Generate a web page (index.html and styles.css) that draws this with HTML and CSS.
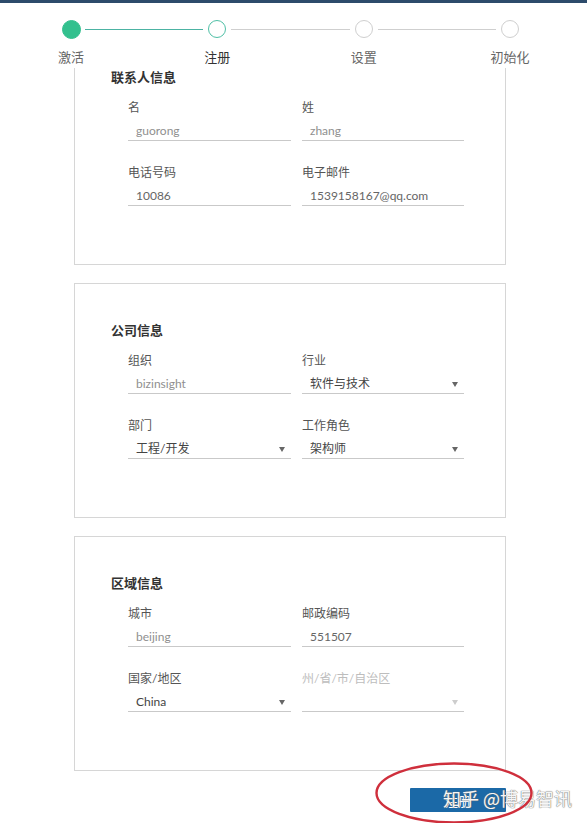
FILE: index.html
```html
<!DOCTYPE html>
<html lang="zh-CN">
<head>
<meta charset="utf-8">
<title>注册</title>
<link rel="stylesheet" href="styles.css">
</head>
<body>
<div class="topbar"></div>
<header class="stepper">
  <div class="step"><span class="dot dot-done"></span><span class="step-label">激活</span></div>
  <span class="connector connector-done"></span>
  <div class="step"><span class="dot dot-current"></span><span class="step-label step-label-current">注册</span></div>
  <span class="connector"></span>
  <div class="step"><span class="dot"></span><span class="step-label">设置</span></div>
  <span class="connector"></span>
  <div class="step"><span class="dot"></span><span class="step-label">初始化</span></div>
</header>

<main class="cards">
  <section class="card card-first">
    <h2 class="card-title">联系人信息</h2>
    <div class="fields">
      <div class="field"><div class="label">名</div><div class="input muted">guorong</div></div>
      <div class="field"><div class="label">姓</div><div class="input muted">zhang</div></div>
      <div class="field"><div class="label">电话号码</div><div class="input">10086</div></div>
      <div class="field"><div class="label">电子邮件</div><div class="input">1539158167@qq.com</div></div>
    </div>
  </section>

  <section class="card">
    <h2 class="card-title">公司信息</h2>
    <div class="fields">
      <div class="field"><div class="label">组织</div><div class="input muted">bizinsight</div></div>
      <div class="field"><div class="label">行业</div><div class="input select"><span>软件与技术</span><span class="arrow"></span></div></div>
      <div class="field"><div class="label">部门</div><div class="input select"><span>工程/开发</span><span class="arrow"></span></div></div>
      <div class="field"><div class="label">工作角色</div><div class="input select"><span>架构师</span><span class="arrow"></span></div></div>
    </div>
  </section>

  <section class="card">
    <h2 class="card-title">区域信息</h2>
    <div class="fields">
      <div class="field"><div class="label">城市</div><div class="input muted">beijing</div></div>
      <div class="field"><div class="label">邮政编码</div><div class="input">551507</div></div>
      <div class="field"><div class="label">国家/地区</div><div class="input select"><span>China</span><span class="arrow"></span></div></div>
      <div class="field field-disabled"><div class="label">州/省/市/自治区</div><div class="input select"><span></span><span class="arrow"></span></div></div>
    </div>
  </section>
</main>

<div class="actions">
  <button class="btn" type="button">注册</button>
</div>

<div class="watermark">知乎 @博易智讯</div>
<svg class="annotation" width="162" height="61" viewBox="0 0 162 61" aria-hidden="true">
  <ellipse cx="80" cy="31" rx="77.5" ry="29.5" fill="none" stroke="#cf2f3c" stroke-width="2.4"/>
</svg>
</body>
</html>
```

FILE: styles.css
```css
html, body {
  margin: 0;
  padding: 0;
  overflow: hidden;
  background: #ffffff;
}

body {
  position: relative;
  width: 587px;
  height: 823px;
  font-family: "Lato", "Noto Sans CJK SC", sans-serif;
  color: #555;
}

.topbar {
  height: 3px;
  background: #2d4b6b;
}

/* stepper */
.stepper {
  display: flex;
  align-items: flex-start;
  margin-left: 62px;
  width: 457px;
  height: 65px;
  padding-top: 17px;
  box-sizing: border-box;
}

.step {
  width: 18px;
  flex: 0 0 18px;
  display: flex;
  flex-direction: column;
  align-items: center;
}

.dot {
  width: 18px;
  height: 18px;
  box-sizing: border-box;
  border-radius: 50%;
  border: 1px solid #cfcfcf;
  background: #fff;
}

.dot-done {
  background: #33c08e;
  border-color: #33c08e;
  width: 19px;
  height: 19px;
  flex: 0 0 19px;
}

.dot-current {
  border-color: #4fbfa6;
}

.step-label {
  margin-top: 10px;
  font-size: 13px;
  line-height: 18px;
  white-space: nowrap;
  color: #666;
}

.dot-done + .step-label {
  margin-top: 9px;
}

.step-label-current {
  color: #333;
}

.connector {
  flex: 1;
  height: 1px;
  margin: 9px 5px 0;
  background: #cfcfcf;
}

.connector-done {
  background: #4cb3a3;
}

/* cards */
.cards {
  display: flex;
  flex-direction: column;
  gap: 18px;
}

.card {
  margin-left: 74px;
  width: 432px;
  box-sizing: border-box;
  border: 1px solid #d6d6d6;
  padding: 37px 0 58px 36px;
}

.card-first {
  border-top: none;
  padding-top: 0;
}

.card-title {
  margin: 0;
  font-size: 13px;
  line-height: 18px;
  font-weight: 700;
  color: #333;
}

.fields {
  margin: 13px 0 0 17px;
  width: 336px;
  display: grid;
  grid-template-columns: 163px 162px;
  column-gap: 11px;
  row-gap: 23px;
}

.label {
  font-size: 12px;
  line-height: 17px;
  color: #555;
}

.input {
  margin-top: 2px;
  height: 19px;
  line-height: 19px;
  padding: 3px 6px 0 8px;
  border-bottom: 1px solid #c9c9c9;
  font-size: 12px;
  color: #666;
}

.input.muted {
  color: #8f8f8f;
}

.select {
  display: flex;
  align-items: center;
  justify-content: space-between;
  color: #444;
}

.arrow {
  width: 0;
  height: 0;
  border-left: 3.5px solid transparent;
  border-right: 3.5px solid transparent;
  border-top: 5px solid #666;
  margin-top: 1px;
}

.field-disabled .label {
  color: #bdbdbd;
}

.field-disabled .arrow {
  border-top-color: #cdcdcd;
}

/* actions */
.actions {
  margin-top: 17px;
  padding-left: 410px;
}

.btn {
  width: 96px;
  height: 24px;
  border: none;
  border-radius: 1px;
  background: #1b69a7;
  color: #fff;
  font-family: "Noto Sans CJK SC", sans-serif;
  font-size: 13px;
  padding: 0;
}

/* overlays */
.watermark {
  position: absolute;
  left: 443px;
  top: 786px;
  font-family: "Noto Sans CJK SC", sans-serif;
  font-size: 18px;
  line-height: 24px;
  color: #f6f6f6;
  white-space: nowrap;
  text-shadow: 0 0 1px #6f6f6f, 0 0 1px #6f6f6f;
}

.annotation {
  position: absolute;
  left: 374px;
  top: 762px;
}
```
